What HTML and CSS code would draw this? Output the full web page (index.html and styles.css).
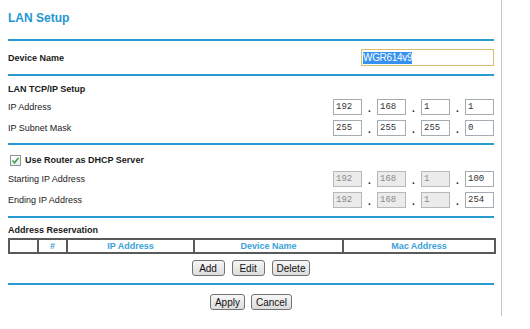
FILE: index.html
```html
<!DOCTYPE html>
<html lang="en">
<head>
  <meta charset="UTF-8">
  <title>LAN Setup</title>
  <link rel="stylesheet" href="styles.css">
</head>
<body>

  <div class="frame">
    <h1 class="title">LAN Setup</h1>
    <div class="rule"></div>

    <div class="row row-device">
      <span class="label bold">Device Name</span>
      <div class="namebox"><span class="sel">WGR614v9</span></div>
    </div>
    <div class="rule"></div>

    <div class="heading">LAN TCP/IP Setup</div>
    <div class="row row-ip">
      <span class="label">IP Address</span>
      <div class="ip">
        <input class="octet" value="192"><span class="dot">.</span>
        <input class="octet" value="168"><span class="dot">.</span>
        <input class="octet" value="1"><span class="dot">.</span>
        <input class="octet" value="1">
      </div>
    </div>
    <div class="row row-ip">
      <span class="label">IP Subnet Mask</span>
      <div class="ip">
        <input class="octet" value="255"><span class="dot">.</span>
        <input class="octet" value="255"><span class="dot">.</span>
        <input class="octet" value="255"><span class="dot">.</span>
        <input class="octet" value="0">
      </div>
    </div>
    <div class="rule rule-gap"></div>

    <div class="check-row">
      <span class="checkbox">
        <svg width="9" height="9" viewBox="0 0 9 9"><path d="M1.5 4.5 L3.6 6.8 L7.6 1.8" fill="none" stroke="#3aa14a" stroke-width="1.5"/></svg>
      </span>
      <span class="bold">Use Router as DHCP Server</span>
    </div>
    <div class="row row-ip">
      <span class="label">Starting IP Address</span>
      <div class="ip">
        <input class="octet off" value="192" disabled><span class="dot">.</span>
        <input class="octet off" value="168" disabled><span class="dot">.</span>
        <input class="octet off" value="1" disabled><span class="dot">.</span>
        <input class="octet" value="100">
      </div>
    </div>
    <div class="row row-ip">
      <span class="label">Ending IP Address</span>
      <div class="ip">
        <input class="octet off" value="192" disabled><span class="dot">.</span>
        <input class="octet off" value="168" disabled><span class="dot">.</span>
        <input class="octet off" value="1" disabled><span class="dot">.</span>
        <input class="octet" value="254">
      </div>
    </div>
    <div class="rule rule-gap2"></div>

    <div class="heading heading-res">Address Reservation</div>
    <table class="reserve">
      <colgroup>
        <col style="width:29px"><col style="width:29px"><col style="width:127px"><col style="width:149px"><col style="width:152px">
      </colgroup>
      <tr>
        <th></th>
        <th>#</th>
        <th>IP Address</th>
        <th>Device Name</th>
        <th>Mac Address</th>
      </tr>
    </table>

    <div class="buttons">
      <button>Add</button>
      <button>Edit</button>
      <button>Delete</button>
    </div>
    <div class="rule rule-gap3"></div>

    <div class="buttons buttons-main">
      <button>Apply</button>
      <button>Cancel</button>
    </div>
  </div>

</body>
</html>
```

FILE: styles.css
```css
body {
  margin: 0;
  background: #fff;
  font-family: 'Liberation Sans', Arial, sans-serif;
  font-size: 9px;
  color: #1a1a1a;
}

.frame {
  width: 486px;
  padding: 0 7px 6px 8px;
  border-right: 1px solid #c6c6c6;
}

.title {
  margin: 0;
  padding-top: 11px;
  margin-bottom: 14px;
  font-size: 12px;
  line-height: 14px;
  font-weight: bold;
  color: #1e98d2;
}

.rule {
  height: 0;
  border-top: 2px solid #2a9bd0;
}

.rule-gap { margin-top: 5px; }
.rule-gap2 { margin-top: 6px; }
.rule-gap3 { margin-top: 7px; }

.bold {
  font-weight: bold;
}

.row {
  display: flex;
  justify-content: space-between;
  align-items: center;
}

.row-device {
  height: 33px;
}

.row-ip {
  height: 21px;
}

.namebox {
  box-sizing: border-box;
  width: 133px;
  height: 17px;
  border: 1px solid #d9bd6e;
  padding: 1px 1px;
  display: flex;
  align-items: center;
}

.sel {
  background: #3592f0;
  color: #fff;
  font-size: 10px;
  line-height: 12px;
  letter-spacing: -0.3px;
}

.heading {
  padding-top: 7px;
  line-height: 13px;
  font-weight: bold;
}

.heading-res {
  padding-top: 6px;
  margin-bottom: 1px;
}

.ip {
  display: flex;
  align-items: center;
}

.octet {
  box-sizing: border-box;
  width: 29px;
  height: 16px;
  margin: 0;
  padding: 0 0 0 2px;
  border: 1px solid #a3abb3;
  border-radius: 0;
  background: #fff;
  font-family: 'Liberation Mono', 'Courier New', monospace;
  font-size: 9px;
  color: #333;
  outline: none;
}

.octet.off {
  background: #ebebeb;
  color: #8a8a8a;
  border-color: #b4b9be;
}

.dot {
  width: 15px;
  text-align: center;
  font-size: 10px;
  font-weight: bold;
  padding-top: 4px;
}

.check-row {
  display: flex;
  align-items: center;
  padding-top: 7px;
  height: 16px;
}

.checkbox {
  box-sizing: border-box;
  width: 11px;
  height: 11px;
  margin-left: 2px;
  margin-right: 4px;
  border: 1px solid #8c9296;
  background: linear-gradient(#ffffff, #e8ecef);
  display: flex;
  align-items: center;
  justify-content: center;
}

.reserve {
  width: 486px;
  table-layout: fixed;
  border-collapse: collapse;
  border: 2px solid #5a5a5a;
}

.reserve th {
  height: 12px;
  padding: 0;
  line-height: 12px;
  border: 2px solid #5a5a5a;
  color: #3aa2d8;
  font-size: 9px;
  font-weight: bold;
  text-align: center;
}

.buttons {
  display: flex;
  justify-content: center;
  gap: 7px;
  margin-top: 6px;
}

.buttons-main {
  gap: 6px;
  margin-top: 9px;
}

button {
  height: 16px;
  min-width: 33px;
  padding: 0 4px;
  font-family: 'Liberation Sans', Arial, sans-serif;
  font-size: 10px;
  color: #111;
  border: 1px solid #727272;
  border-radius: 3px;
  background: linear-gradient(#f7f7f7, #dcdcdc);
}
```
